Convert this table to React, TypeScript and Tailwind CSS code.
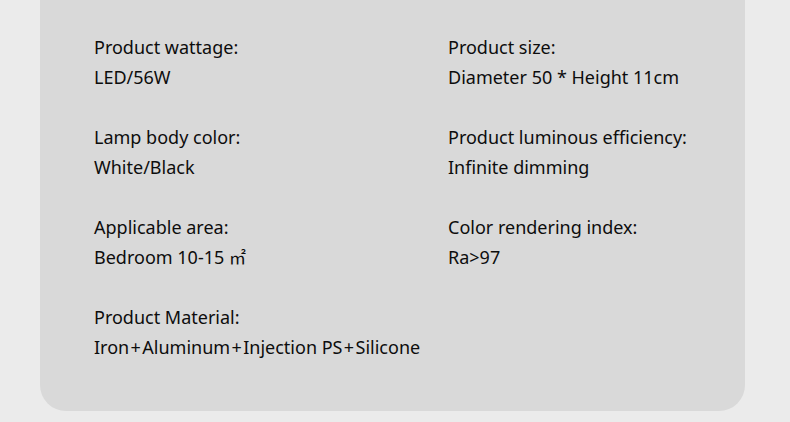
import React from "react";

export default function App() {
  const plus = <span className="mx-[1.4px]">+</span>;
  const items: [string, React.ReactNode][] = [
    ["Product wattage:", "LED/56W"],
    ["Product size:", "Diameter 50 * Height 11cm"],
    ["Lamp body color:", "White/Black"],
    ["Product luminous efficiency:", "Infinite dimming"],
    [
      "Applicable area:",
      <>
        Bedroom 10-15{" "}
        <span style={{ fontFamily: '"Noto Sans CJK SC", sans-serif' }} className="text-[17px]">
          {"\u33A1"}
        </span>
      </>,
    ],
    ["Color rendering index:", "Ra>97"],
    [
      "Product Material:",
      <>
        Iron{plus}Aluminum{plus}Injection PS{plus}Silicone
      </>,
    ],
  ];
  return (
    <div className="w-[790px] h-[422px] bg-[#ebebeb] pl-[40px] pr-[45px] overflow-hidden">
      <div
        className="h-[411px] bg-[#d9d9d9] rounded-b-[26px] pl-[54px] pt-[32px] text-[#0d0d0d] text-[18px] leading-[30px]"
        style={{ fontFamily: '"Noto Sans", "Open Sans", sans-serif' }}
      >
        <div className="grid grid-cols-[354px_1fr] gap-y-[30px]">
          {items.map(([l, v]) => (
            <div key={l}>
              <div>{l}</div>
              <div>{v}</div>
            </div>
          ))}
        </div>
      </div>
    </div>
  );
}
